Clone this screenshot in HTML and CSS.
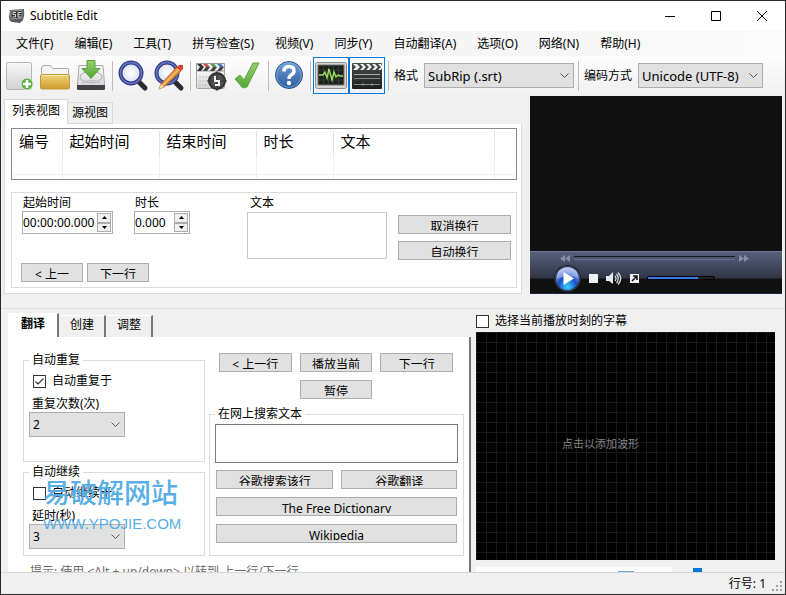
FILE: index.html
```html
<!DOCTYPE html>
<html lang="zh-CN">
<head>
    <meta charset="UTF-8">
    <meta name="viewport" content="width=device-width, initial-scale=1.0">
    <title>Subtitle Edit</title>
    <link rel="stylesheet" href="styles.css">
</head>
<body>
    <div class="window">
        <header class="titlebar">
            <svg class="app-icon" width="16" height="14" viewBox="0 0 16 14">
                <path d="M1 1 L15 0 Q16 6 14 11 L11 14 L3 13 Q0 12 0 8 Z" fill="#5a5a5a"/>
                <path d="M2 2 L13 1.500 L13 9 L2 10 Z" fill="#2e2e2e" stroke="#9a9a9a" stroke-width="1"/>
                <path d="M7 3.500H4V5.500H6.500V8H3.500M12 3.500H9V8H12M9 5.700H11.500" fill="none" stroke="#ddd" stroke-width="1"/>
            </svg>
            <h1>Subtitle Edit</h1>
            <div class="window-buttons">
                <button aria-label="最小化"><svg width="12" height="12" viewBox="0 0 12 12"><path d="M1 6.500H11" stroke="#000"/></svg></button>
                <button aria-label="最大化"><svg width="12" height="12" viewBox="0 0 12 12"><path d="M1.500 1.500H10.500V10.500H1.500Z" fill="none" stroke="#000"/></svg></button>
                <button aria-label="关闭"><svg width="12" height="12" viewBox="0 0 12 12"><path d="M1 1L11 11M11 1L1 11" stroke="#000"/></svg></button>
            </div>
        </header>

        <nav class="menubar">
            <a href="#">文件(F)</a>
            <a href="#">编辑(E)</a>
            <a href="#">工具(T)</a>
            <a href="#">拼写检查(S)</a>
            <a href="#">视频(V)</a>
            <a href="#">同步(Y)</a>
            <a href="#">自动翻译(A)</a>
            <a href="#">选项(O)</a>
            <a href="#">网络(N)</a>
            <a href="#">帮助(H)</a>
        </nav>

        <div class="toolbar">
            <svg class="defs" width="0" height="0">
                <defs>
                    <linearGradient id="paper" x1="0" y1="0" x2="0" y2="1"><stop offset="0" stop-color="#f8f8f8"/><stop offset="1" stop-color="#d2d2d4"/></linearGradient>
                    <linearGradient id="gold" x1="0" y1="0" x2="0" y2="1"><stop offset="0" stop-color="#f0d37a"/><stop offset="1" stop-color="#cf9d2c"/></linearGradient>
                    <linearGradient id="green" x1="0" y1="0" x2="0" y2="1"><stop offset="0" stop-color="#9ad06a"/><stop offset="1" stop-color="#4fa636"/></linearGradient>
                    <linearGradient id="blue" x1="0" y1="0" x2="0" y2="1"><stop offset="0" stop-color="#6f9fd4"/><stop offset="1" stop-color="#2c5c9c"/></linearGradient>
                    <linearGradient id="dark" x1="0" y1="0" x2="0" y2="1"><stop offset="0" stop-color="#4a4d4e"/><stop offset="1" stop-color="#1c1e1f"/></linearGradient>
                    <radialGradient id="lens"><stop offset="0" stop-color="#ffffff"/><stop offset="1" stop-color="#d5ddee"/></radialGradient>
                    <radialGradient id="play" cx="0.5" cy="0.85" r="0.8"><stop offset="0" stop-color="#3fd2ff"/><stop offset="0.5" stop-color="#1550c8"/><stop offset="1" stop-color="#aab8ee"/></radialGradient>
                </defs>
            </svg>
            <button class="tool" aria-label="新建">
                <svg width="32" height="33" viewBox="0 0 32 33">
                    <rect x="3.500" y="3.500" width="25" height="27" rx="2" fill="url(#paper)" stroke="#b4b4b4"/>
                    <circle cx="24" cy="25" r="6" fill="#5fae3e" stroke="#d8ecd0"/>
                    <path d="M24 21V29M20 25H28" stroke="#fff" stroke-width="2.500"/>
                </svg>
            </button>
            <button class="tool" aria-label="打开">
                <svg width="32" height="33" viewBox="0 0 32 33">
                    <path d="M2.500 16V9Q2.500 6.500 5 6.500H11.500L14 9.500H28Q29.500 9.500 29.500 11V16Z" fill="#f4f4f4" stroke="#aaa"/>
                    <rect x="1.500" y="15.500" width="29" height="14.500" rx="1.500" fill="url(#gold)" stroke="#c19a3a"/>
                    <path d="M3 16.500H29" stroke="#f9e7ac"/>
                </svg>
            </button>
            <button class="tool" aria-label="保存">
                <svg width="32" height="33" viewBox="0 0 32 33">
                    <path d="M4 6.500H28L29.500 25V30H2.500V25Z" fill="url(#paper)" stroke="#aaa"/>
                    <path d="M2 26H30V29.500Q30 31 28 31H4Q2 31 2 29.500Z" fill="#404245"/>
                    <ellipse cx="16" cy="18" rx="11" ry="5.500" fill="none" stroke="#a9adb0" stroke-width="1"/>
                    <path d="M7 24Q16 19 25 24" fill="none" stroke="#b9bcbe"/>
                    <path d="M12 1.500H20V9.500H25L16 19.500L7 9.500H12Z" fill="url(#green)" stroke="#57a03d"/>
                </svg>
            </button>
            <span class="separator"></span>
            <button class="tool" aria-label="查找">
                <svg width="32" height="33" viewBox="0 0 32 33">
                    <path d="M19 20L22.500 24" stroke="#999" stroke-width="4"/>
                    <path d="M22.500 23.500L28 29" stroke="#2c2c2e" stroke-width="5" stroke-linecap="round"/>
                    <circle cx="14" cy="14" r="10.500" fill="url(#lens)" stroke="#303c84" stroke-width="4"/>
                    <circle cx="14" cy="14" r="10.500" fill="none" stroke="#6674c4" stroke-width="1.500"/>
                </svg>
            </button>
            <button class="tool" aria-label="替换">
                <svg width="32" height="33" viewBox="0 0 32 33">
                    <path d="M19 20L22.500 24" stroke="#999" stroke-width="4"/>
                    <path d="M22.500 23.500L28 29" stroke="#2c2c2e" stroke-width="5" stroke-linecap="round"/>
                    <circle cx="14" cy="14" r="10.500" fill="url(#lens)" stroke="#303c84" stroke-width="4"/>
                    <circle cx="14" cy="14" r="10.500" fill="none" stroke="#6674c4" stroke-width="1.500"/>
                    <path d="M6 30L8 25L24 8L28 12L11 28Z" fill="#e98f35" stroke="#a85d18" stroke-width="0.800"/>
                    <path d="M9.500 26.500L26 10" stroke="#f9c27c" stroke-width="1.500"/>
                    <path d="M6 30L8 25L11 28Z" fill="#f2dcae"/>
                    <path d="M24 8L26 6H30V10L28 12Z" fill="#df4034"/>
                </svg>
            </button>
            <span class="separator"></span>
            <button class="tool" aria-label="可视同步">
                <svg width="32" height="33" viewBox="0 0 32 33">
                    <rect x="1.500" y="11.500" width="28" height="18" rx="1" fill="url(#paper)" stroke="#a5a5a5"/>
                    <path d="M1.500 4.500H29.500V12H1.500Z" fill="#eee" stroke="#999"/>
                    <path d="M2 5H6L9 8H5Z M2 12L5 8H9L6 12Z" fill="#333"/>
                    <path d="M8 5H12L15 8H11Z" fill="#c54b4b"/><path d="M15 5H19L22 8H18Z" fill="#4a9a58"/><path d="M22 5H26L29 8H25Z" fill="#4b70c5"/>
                    <path d="M8 12L11 8H15L12 12Z M15 12L18 8H22L19 12Z M22 12L25 8H29L26 12Z" fill="#444"/>
                    <path d="M4 18H14M4 22H12M4 26H13" stroke="#bbb" stroke-dasharray="2 1"/>
                    <circle cx="22" cy="22" r="8" fill="#505254" stroke="#2d2f30" stroke-width="2"/>
                    <path d="M22 12V32M12 22H32" stroke="#333" stroke-width="1"/>
                    <path d="M20 17V22H24V26H20" fill="none" stroke="#f3f3f3" stroke-width="2"/>
                </svg>
            </button>
            <button class="tool" aria-label="拼写检查">
                <svg width="32" height="33" viewBox="0 0 32 33">
                    <path d="M4 20L9 16L13 21L22 4L28 4L16 28L12 29Z" fill="url(#green)" stroke="#5aa43f" stroke-width="1" stroke-linejoin="round"/>
                </svg>
            </button>
            <span class="separator"></span>
            <button class="tool" aria-label="帮助">
                <svg width="32" height="33" viewBox="0 0 32 33">
                    <circle cx="16" cy="16" r="13.500" fill="url(#blue)" stroke="#2b5690"/>
                    <circle cx="16" cy="16" r="12.300" fill="none" stroke="#86aedb" stroke-width="0.700"/>
                    <path d="M11 12.500Q11 7.500 16 7.500Q21 7.500 21 12Q21 14.500 18 16Q16 17 16 20" fill="none" stroke="#fff" stroke-width="3.500"/>
                    <circle cx="16" cy="24" r="2.200" fill="#fff"/>
                </svg>
            </button>
            <span class="separator"></span>
            <button class="tool selected" aria-label="显示波形" aria-pressed="true">
                <svg width="32" height="33" viewBox="0 0 32 33">
                    <rect x="0.500" y="3.500" width="31" height="26" rx="2" fill="#d6d6d6" stroke="#8c8c8c"/>
                    <rect x="3" y="6" width="26" height="20" fill="#1c211b" stroke="#777"/>
                    <path d="M8.500 6V26M13.500 6V26M18.500 6V26M23.500 6V26M3 11H29M3 16H29M3 21H29" stroke="#3b423a" stroke-width="0.800"/>
                    <path d="M4 16H8L10 13L12 19L14 10L17 21L19 13L21 18L23 16L25 17H28" fill="none" stroke="#9be05a" stroke-width="1.400"/>
                </svg>
            </button>
            <button class="tool selected" aria-label="显示视频" aria-pressed="true">
                <svg width="32" height="33" viewBox="0 0 32 33">
                    <rect x="1" y="4" width="30" height="26" rx="1" fill="url(#dark)"/>
                    <path d="M2 5H6L9 8L6 11H2L5 8Z M9 5H12L15 8L12 11H9L12 8Z M15 5H18L21 8L18 11H15L18 8Z M21 5H24L27 8L24 11H21L24 8Z M27 5H30L31 7V9L30 11H27L30 8Z" fill="#f4f4f4"/>
                    <path d="M3 15.500H29" stroke="#aaa"/>
                    <path d="M3 19.500H29M3 25.500H29M12 24V27M21 24V27" stroke="#888"/>
                </svg>
            </button>
            <span class="separator"></span>
            <label for="format">格式</label>
            <select id="format" class="format"><option>SubRip (.srt)</option></select>
            <span class="separator"></span>
            <label for="encoding">编码方式</label>
            <select id="encoding" class="encoding"><option>Unicode (UTF-8)</option></select>
        </div>

        <main class="upper">
            <section class="list-pane">
                <div class="tabs" role="tablist">
                    <button class="tab active" role="tab" aria-selected="true">列表视图</button>
                    <button class="tab" role="tab" aria-selected="false">源视图</button>
                </div>
                <div class="list-panel">
                    <div class="list-view">
                        <table>
                            <thead>
                                <tr>
                                    <th class="col-number">编号</th>
                                    <th class="col-time">起始时间</th>
                                    <th class="col-time">结束时间</th>
                                    <th class="col-duration">时长</th>
                                    <th>文本</th>
                                    <th class="col-rest"></th>
                                </tr>
                            </thead>
                            <tbody>
                                <tr><td></td><td></td><td></td><td></td><td></td><td></td></tr>
                                <tr><td></td><td></td><td></td><td></td><td></td><td></td></tr>
                            </tbody>
                        </table>
                    </div>
                    <div class="edit-box">
                        <div class="times">
                            <div class="time-fields">
                                <div class="field">
                                    <label for="start-time">起始时间</label>
                                    <div class="spinner start-time">
                                        <input type="text" id="start-time" value="00:00:00.000">
                                        <div class="steps">
                                            <button aria-label="增加"><svg width="5" height="3" viewBox="0 0 5 3"><path d="M0 3L2.500 0L5 3Z"/></svg></button>
                                            <button aria-label="减少"><svg width="5" height="3" viewBox="0 0 5 3"><path d="M0 0L2.500 3L5 0Z"/></svg></button>
                                        </div>
                                    </div>
                                </div>
                                <div class="field">
                                    <label for="duration">时长</label>
                                    <div class="spinner duration">
                                        <input type="text" id="duration" value="0.000">
                                        <div class="steps">
                                            <button aria-label="增加"><svg width="5" height="3" viewBox="0 0 5 3"><path d="M0 3L2.500 0L5 3Z"/></svg></button>
                                            <button aria-label="减少"><svg width="5" height="3" viewBox="0 0 5 3"><path d="M0 0L2.500 3L5 0Z"/></svg></button>
                                        </div>
                                    </div>
                                </div>
                            </div>
                            <div class="line-buttons">
                                <button class="push"><span>&lt; 上一</span></button>
                                <button class="push"><span>下一行</span></button>
                            </div>
                        </div>
                        <div class="line-text">
                            <label for="line-text">文本</label>
                            <textarea id="line-text"></textarea>
                        </div>
                        <div class="wrap-buttons">
                            <button class="push"><span>取消换行</span></button>
                            <button class="push"><span>自动换行</span></button>
                        </div>
                    </div>
                </div>
            </section>

            <section class="video">
                <div class="video-controls">
                    <div class="seek">
                        <svg width="10" height="7" viewBox="0 0 10 7"><path d="M5 0V7L0 3.500ZM10 0V7L5 3.500Z" fill="#8790a8"/></svg>
                        <div class="seek-line"></div>
                        <svg width="10" height="7" viewBox="0 0 10 7"><path d="M0 0V7L5 3.500ZM5 0V7L10 3.500Z" fill="#8790a8"/></svg>
                    </div>
                    <div class="playback">
                        <button aria-label="播放">
                            <svg width="27" height="27" viewBox="0 0 27 27">
                                <circle cx="13.500" cy="13.500" r="13.500" fill="#10141f"/>
                                <circle cx="13.500" cy="13.500" r="12.500" fill="none" stroke="#596278" stroke-width="0.800"/>
                                <circle cx="13.500" cy="13.500" r="11.500" fill="url(#play)"/>
                                <path d="M3 14Q3 3 13.500 3Q24 3 24 13Q13 9 3 14Z" fill="#fff" fill-opacity="0.300"/>
                                <path d="M9.500 7L20 13.500L9.500 20Z" fill="#fff"/>
                            </svg>
                        </button>
                        <button aria-label="停止"><svg width="9" height="9" viewBox="0 0 9 9"><rect width="9" height="9" fill="#eef1f4"/></svg></button>
                        <button aria-label="静音">
                            <svg width="16" height="13" viewBox="0 0 16 13">
                                <path d="M0 4H3L7 0V12L3 9H0Z" fill="#e6e9ee"/>
                                <path d="M9 4Q11 6.500 9 9M10.500 2Q14 6.500 10.500 11M12 0.500Q17.500 6.500 12 12.500" fill="none" stroke="#d5d9e0" stroke-width="1.300"/>
                            </svg>
                        </button>
                        <button aria-label="全屏"><svg width="9" height="9" viewBox="0 0 9 9"><rect width="9" height="9" fill="#eef1f4"/><path d="M2 7L6 3M3 2H7V6" fill="none" stroke="#111" stroke-width="1.600"/></svg></button>
                        <div class="volume"><div class="volume-level"></div></div>
                    </div>
                </div>
            </section>
        </main>

        <section class="lower">
            <div class="modes">
                <div class="mode-tabs" role="tablist">
                    <button class="mode-tab active" role="tab" aria-selected="true">翻译</button>
                    <button class="mode-tab" role="tab" aria-selected="false">创建</button>
                    <button class="mode-tab" role="tab" aria-selected="false">调整</button>
                </div>
                <div class="mode-panel">
                    <div class="mode-columns">
                        <div class="auto-column">
                            <fieldset class="repeat">
                                <legend>自动重复</legend>
                                <div class="check-row">
                                    <input type="checkbox" id="auto-repeat" checked>
                                    <label for="auto-repeat">自动重复于</label>
                                </div>
                                <label class="select-label" for="repeat-count">重复次数(次)</label>
                                <select id="repeat-count"><option>2</option></select>
                            </fieldset>
                            <fieldset>
                                <legend>自动继续</legend>
                                <div class="check-row">
                                    <input type="checkbox" id="auto-continue">
                                    <label for="auto-continue">自动继续于</label>
                                </div>
                                <label class="select-label" for="delay">延时(秒)</label>
                                <select id="delay"><option>3</option></select>
                            </fieldset>
                            <div class="watermark">
                                <p class="watermark-name">易破解网站</p>
                                <p class="watermark-url">WWW.YPOJIE.COM</p>
                            </div>
                        </div>
                        <div class="search-column">
                            <div class="play-buttons">
                                <button class="push"><span>&lt; 上一行</span></button>
                                <button class="push"><span>播放当前</span></button>
                                <button class="push"><span>下一行</span></button>
                                <button class="push pause"><span>暂停</span></button>
                            </div>
                            <fieldset class="search">
                                <legend>在网上搜索文本</legend>
                                <textarea aria-label="在网上搜索文本"></textarea>
                                <div class="search-buttons">
                                    <button class="push"><span>谷歌搜索该行</span></button>
                                    <button class="push"><span>谷歌翻译</span></button>
                                    <button class="push wide"><span>The Free Dictionary</span></button>
                                    <button class="push wide"><span>Wikipedia</span></button>
                                </div>
                            </fieldset>
                        </div>
                    </div>
                    <p class="hint">提示: 使用 &lt;Alt + up/down&gt; 以转到 上一行/下一行</p>
                </div>
            </div>

            <div class="wave-pane">
                <div class="check-row">
                    <input type="checkbox" id="select-current">
                    <label for="select-current">选择当前播放时刻的字幕</label>
                </div>
                <div class="waveform">点击以添加波形</div>
                <div class="wave-tools">
                    <div class="wave-strip"><span></span></div>
                    <div class="wave-thumb"></div>
                </div>
            </div>
        </section>

        <footer class="statusbar">
            <span>行号: 1</span>
            <svg width="11" height="11" viewBox="0 0 11 11"><path d="M8 0H10V2H8ZM4 4H6V6H4ZM8 4H10V6H8ZM0 8H2V10H0ZM4 8H6V10H4ZM8 8H10V10H8Z" fill="#a0a0a0"/></svg>
        </footer>
    </div>
</body>
</html>
```

FILE: styles.css
```css
* {
    box-sizing: border-box;
}

body, h1, p, fieldset, legend, input, select, textarea, button {
    margin: 0;
    padding: 0;
    font-family: "Noto Sans", "Noto Sans CJK SC", sans-serif;
    font-size: 12px;
    font-weight: normal;
    line-height: 16px;
    color: #000;
}

body {
    background-color: #2a2729;
    padding: 1px;
}

svg {
    display: block;
}

a {
    color: inherit;
    text-decoration: none;
}

button {
    border: none;
    background: none;
}

label {
    display: block;
    white-space: nowrap;
}

.window {
    display: flex;
    flex-direction: column;
    height: calc(100vh - 2px);
    background-color: #f0f0f0;
    overflow: hidden;
}

/* Title bar */
.titlebar {
    display: flex;
    align-items: center;
    flex: none;
    height: 30px;
    padding-left: 8px;
    background-color: #fff;
}

.titlebar h1 {
    margin-left: 5px;
}

.window-buttons {
    display: flex;
    margin-left: auto;
}

.window-buttons button {
    display: flex;
    align-items: center;
    justify-content: center;
    width: 46px;
    height: 28px;
}

/* Menu */
.menubar {
    display: flex;
    gap: 1px;
    flex: none;
    height: 25px;
    padding-left: 5px;
    background: linear-gradient(to right, #f0f0f0, #fafafa);
}

.menubar a {
    padding: 0 10px;
    line-height: 25px;
    white-space: nowrap;
}

/* Toolbar */
.toolbar {
    display: flex;
    align-items: center;
    flex: none;
    height: 40px;
    padding-bottom: 1px;
    background: linear-gradient(#fdfdfd, #f0f0f0);
}

.defs {
    position: absolute;
}

.tool {
    display: flex;
    align-items: center;
    justify-content: center;
    flex: none;
    width: 36px;
    height: 37px;
}

.tool.selected {
    border: 1px solid #0078d7;
}

.separator {
    flex: none;
    width: 6px;
    height: 30px;
    background: linear-gradient(#bdbdbd, #bdbdbd) 3px 0 / 1px 100% no-repeat;
}

.toolbar label {
    padding: 0 6px 0 3px;
}

select {
    appearance: none;
    width: 96px;
    height: 25px;
    padding: 0 3px;
    border: 1px solid #adadad;
    border-radius: 0;
    background: #e1e1e1 url("data:image/svg+xml,%3Csvg xmlns='http://www.w3.org/2000/svg' width='9' height='6'%3E%3Cpath d='M.5 .5L4.500 4.500L8.500 .5' fill='none' stroke='%23555'/%3E%3C/svg%3E") right 4px center no-repeat;
}

.toolbar select {
    font-size: 13px;
}

.toolbar .format {
    width: 150px;
    margin-right: 1px;
}

.toolbar .encoding {
    width: 125px;
}

/* Push buttons, captions are cut off at the bottom */
.push {
    height: 19px;
    border: 1px solid #adadad;
    background-color: #e1e1e1;
}

.push span {
    display: block;
    height: 15px;
    margin-bottom: 2px;
    line-height: 22px;
    overflow: hidden;
    white-space: nowrap;
}

/* Upper half */
.upper {
    display: grid;
    grid-template-columns: 518fr 252fr;
    gap: 8px;
    flex: none;
    padding: 0 3px;
}

.list-pane {
    padding-top: 3px;
}

.tabs {
    display: flex;
    align-items: flex-end;
    height: 25px;
}

.tab {
    height: 22px;
    padding: 0 4px;
    border: 1px solid #d9d9d9;
    border-left: none;
}

.tab.active {
    height: 25px;
    padding: 0 7px 3px;
    border-left: 1px solid #d9d9d9;
    border-bottom: none;
    background-color: #fff;
}

.list-panel {
    padding: 4px 4px 5px 6px;
    border: 1px solid #dcdcdc;
    border-top: none;
    background-color: #fff;
}

.list-view {
    padding-top: 2px;
    border: 1px solid #828790;
}

.list-view table {
    width: 100%;
    table-layout: fixed;
    border-collapse: collapse;
}

.list-view th {
    height: 24px;
    padding: 0 0 3px 7px;
    border-right: 1px solid #e2e2e2;
    font-size: 15px;
    font-weight: normal;
    line-height: 21px;
    text-align: left;
}

.list-view td {
    height: 19px;
    padding: 0;
    border-right: 1px solid #f0f0f0;
    border-bottom: 1px solid #f0f0f0;
}

.list-view tr:last-child td {
    height: 5px;
    border-bottom: none;
}

.list-view th:last-child, .list-view td:last-child {
    border-right: none;
}

.col-number {
    width: 50px;
}

.col-time {
    width: 97px;
}

.col-duration {
    width: 77px;
}

.col-rest {
    width: 22px;
}

.edit-box {
    display: flex;
    margin-top: 12px;
    padding: 2px 5px 5px 9px;
    border: 1px solid #dcdcdc;
}

.times {
    flex: none;
    width: 226px;
}

.time-fields {
    display: flex;
    gap: 21px;
    padding-left: 1px;
}

.field label {
    padding-left: 1px;
}

.spinner {
    display: flex;
    height: 23px;
    border: 1px solid #adadad;
    background-color: #fff;
}

.spinner.start-time {
    width: 91px;
}

.spinner.duration {
    width: 56px;
}

.spinner input {
    flex: 1;
    min-width: 0;
    border: none;
    outline: none;
}

.steps {
    display: flex;
    flex-direction: column;
    flex: none;
    width: 15px;
    padding: 1px 1px 1px 0;
}

.steps button {
    display: flex;
    align-items: center;
    justify-content: center;
    flex: 1;
    border: 1px solid #adadad;
    background-color: #f0f0f0;
}

.line-buttons {
    display: flex;
    gap: 4px;
    margin-top: 29px;
}

.line-buttons .push {
    width: 62px;
}

.line-text {
    flex: 1;
}

.line-text label {
    padding-left: 3px;
}

.line-text textarea {
    display: block;
    width: 100%;
    height: 47px;
    margin-top: 1px;
    border: 1px solid #c8c8c8;
    resize: none;
}

.wrap-buttons {
    display: flex;
    flex-direction: column;
    gap: 7px;
    flex: none;
    width: 113px;
    margin-left: 11px;
    padding-top: 20px;
}

/* Video player */
.video {
    display: flex;
    flex-direction: column;
    justify-content: flex-end;
    background-color: #111;
}

.video-controls {
    height: 43px;
    border-top: 1px solid #6d7694;
    border-bottom: 1px solid #1d2a4c;
    background: linear-gradient(#56607c, #303646 26px, #111 27px);
}

.seek {
    display: flex;
    align-items: center;
    gap: 4px;
    height: 12px;
    padding: 0 33px 0 30px;
}

.seek-line {
    flex: 1;
    height: 4px;
    border-top: 1px solid #15181f;
    border-bottom: 1px solid #6a728a;
}

.playback {
    display: flex;
    align-items: center;
    gap: 8px;
    height: 28px;
    padding-left: 24px;
}

.volume {
    width: 68px;
    height: 4px;
    border: 1px solid #000;
    border-radius: 2px;
    background-color: #22252d;
}

.volume-level {
    width: 75%;
    height: 2px;
    background-color: #3f78e8;
}

/* Lower half */
.lower {
    display: flex;
    flex: 1;
    min-height: 0;
    margin-top: 14px;
    padding: 4px 10px 0 7px;
    border-top: 1px solid #dcdcdc;
    overflow: hidden;
}

.modes {
    display: flex;
    flex-direction: column;
    flex: 463;
    min-width: 0;
}

.mode-tabs {
    display: flex;
    align-items: flex-end;
    gap: 1px;
    flex: none;
    height: 24px;
}

.mode-tab {
    width: 46px;
    height: 22px;
    padding-bottom: 3px;
    border-right: 2px solid #777;
    border-top: 1px solid #fff;
}

.mode-tab.active {
    width: 51px;
    height: 24px;
    border-left: 1px solid #fff;
    background-color: #fff;
    font-weight: bold;
}

.mode-panel {
    flex: 1;
    min-height: 0;
    padding: 15px 5px 0 15px;
    border-right: 2px solid #777;
    background-color: #fff;
    overflow: hidden;
}

.mode-columns {
    display: flex;
    gap: 4px;
}

.auto-column {
    display: flex;
    flex-direction: column;
    gap: 2px;
    flex: none;
    width: 182px;
    position: relative;
}

fieldset {
    min-width: 0;
    padding: 5px 5px 6px;
    border: 1px solid #dcdcdc;
}

fieldset.repeat {
    padding-bottom: 24px;
}

legend {
    padding: 0 3px;
}

.check-row {
    display: flex;
    align-items: center;
    gap: 6px;
}

fieldset .check-row {
    padding-left: 4px;
}

input[type="checkbox"] {
    appearance: none;
    flex: none;
    width: 13px;
    height: 13px;
    border: 1px solid #333;
    background: #fff center no-repeat;
}

input[type="checkbox"]:checked {
    background-image: url("data:image/svg+xml,%3Csvg xmlns='http://www.w3.org/2000/svg' width='11' height='11'%3E%3Cpath d='M1.500 5.500L4 8L9.500 2.500' fill='none' stroke='%23333' stroke-width='1.200'/%3E%3C/svg%3E");
}

.select-label {
    margin-top: 7px;
    padding-left: 3px;
}

fieldset select {
    display: block;
}

.search-column {
    flex: 1;
    min-width: 0;
}

.play-buttons {
    display: grid;
    grid-template-columns: repeat(3, 1fr);
    gap: 8px;
    padding: 1px 11px 0 10px;
}

.pause {
    grid-column: 2;
}

fieldset.search {
    margin-top: 7px;
    padding: 2px 5px 12px;
}

.search textarea {
    display: block;
    width: 100%;
    height: 39px;
    border: 1px solid #7a7a7a;
    resize: none;
}

.search-buttons {
    display: grid;
    grid-template-columns: 118fr 116fr;
    gap: 8px;
    padding: 7px 1px 0;
}

.wide {
    grid-column: span 2;
}

.hint {
    margin-top: 8px;
    padding-left: 7px;
    color: #6d6d6d;
    white-space: nowrap;
}

/* Watermark lies over the option groups */
.watermark {
    position: absolute;
    left: 20px;
    bottom: 18px;
    color: #58aee6;
    pointer-events: none;
}

.watermark p {
    color: inherit;
    white-space: nowrap;
}

.watermark .watermark-name {
    font-size: 27px;
    font-weight: 500;
    line-height: 34px;
}

.watermark .watermark-url {
    font-family: "Liberation Sans", sans-serif;
    font-size: 15px;
    line-height: 28px;
}

/* Waveform */
.wave-pane {
    display: flex;
    flex-direction: column;
    flex: 299;
    min-width: 0;
    margin-left: 5px;
}

.wave-pane .check-row {
    flex: none;
}

.waveform {
    display: flex;
    align-items: center;
    justify-content: center;
    flex: none;
    height: 228px;
    margin-top: 3px;
    padding: 0 50px 4px 0;
    background-color: #000;
    background-image: linear-gradient(to right, #191919 1px, transparent 1px), linear-gradient(#191919 1px, transparent 1px);
    background-size: 10px 10px;
    color: #858585;
    font-size: 11px;
}

.wave-tools {
    display: flex;
    gap: 21px;
    margin-top: 7px;
}

.wave-strip {
    display: flex;
    justify-content: flex-end;
    align-items: flex-end;
    width: 196px;
    height: 5px;
    padding-right: 38px;
    background-color: #fcfcfc;
}

.wave-strip span {
    width: 16px;
    height: 1px;
    background-color: #6ba6dc;
}

.wave-thumb {
    width: 9px;
    height: 4px;
    margin-top: 1px;
    background-color: #0078d7;
}

/* Status bar */
.statusbar {
    display: flex;
    align-items: center;
    justify-content: flex-end;
    gap: 6px;
    flex: none;
    height: 22px;
    padding-right: 2px;
    border-top: 1px solid #d7d7d7;
    background-color: #f0f0f0;
}

.statusbar svg {
    align-self: flex-end;
    margin-bottom: 2px;
}
```
